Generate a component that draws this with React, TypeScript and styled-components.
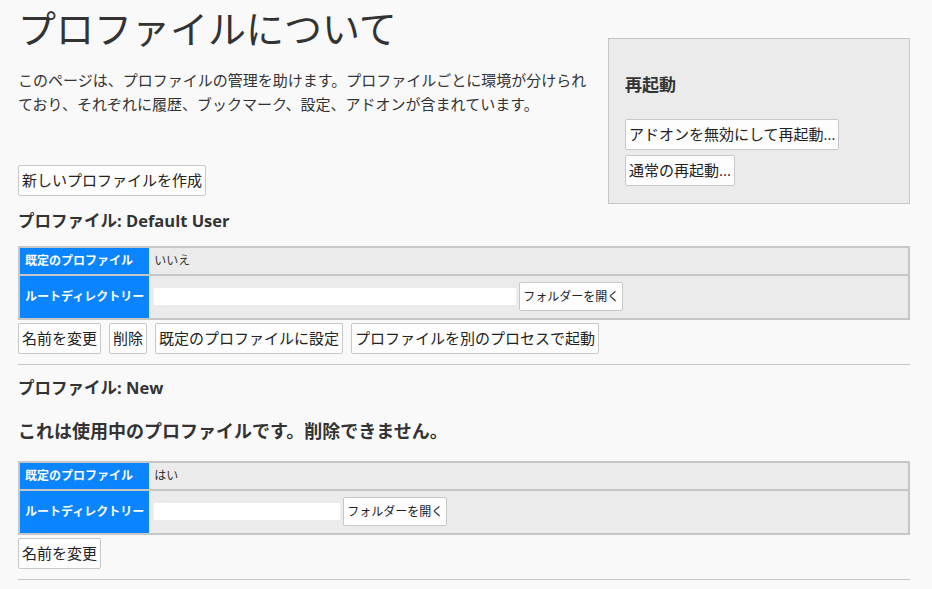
import React from "react";
import styled, { createGlobalStyle } from "styled-components";

const GlobalStyle = createGlobalStyle`
  html, body {
    margin: 0;
    padding: 0;
    background: #f9f9fa;
  }
  body {
    font-family: "Open Sans", "Noto Sans CJK JP", sans-serif;
    color: #333;
  }
`;

const Page = styled.main`
  width: 892px;
  margin-left: 18px;
`;

const Top = styled.div`
  display: flex;
  justify-content: space-between;
  align-items: flex-start;
  margin-bottom: 5px;
`;

const Intro = styled.div`
  width: 578px;
`;

const Title = styled.h1`
  margin: 0;
  padding-top: 5px;
  font-size: 38px;
  line-height: 46px;
  font-weight: 400;
  color: #333;
`;

const Lead = styled.p`
  margin: 17px 0 0;
  font-size: 15px;
  line-height: 24px;
  color: #333;
`;

const ButtonRow = styled.div<{ $top: number }>`
  display: flex;
  gap: 8px;
  margin-top: ${(p) => p.$top}px;
`;

const Button = styled.button<{ $small?: boolean }>`
  font-family: inherit;
  font-size: ${(p) => (p.$small ? 12 : 15)}px;
  line-height: ${(p) => (p.$small ? 19 : 23)}px;
  padding: ${(p) => (p.$small ? "4px 3px" : "3px 3px")};
  margin: 0;
  border: 1px solid #c8c8c8;
  border-radius: 2px;
  background: #fdfdfd;
  color: #222;
  white-space: nowrap;
  cursor: pointer;
`;

const ActionBox = styled.aside`
  box-sizing: border-box;
  width: 302px;
  margin-top: 38px;
  padding: 0 16px 17px;
  background: #ebebeb;
  border: 1px solid #c6c6c6;
  display: flex;
  flex-direction: column;
  align-items: flex-start;
  gap: 5px;
`;

const BoxTitle = styled.h3`
  margin: 34px 0 17px;
  font-size: 17px;
  line-height: 24px;
  font-weight: 700;
  color: #333;
`;

const SectionTitle = styled.h2`
  margin: 0;
  font-size: 16.5px;
  line-height: 24px;
  font-weight: 700;
  color: #333;
`;

const Notice = styled.h3`
  margin: 18px 0 0;
  font-size: 18px;
  line-height: 26px;
  font-weight: 700;
  color: #333;
`;

const InfoTable = styled.table<{ $top: number }>`
  width: 100%;
  border-collapse: collapse;
  border: 2px solid #c6c6c6;
  margin-top: ${(p) => p.$top}px;
`;

const Row = styled.tr`
  & + & {
    border-top: 2px solid #c6c6c6;
  }
`;

const HeadCell = styled.th`
  width: 118px;
  padding: 4px 5px;
  background: #0a84ff;
  color: #fff;
  font-size: 12px;
  line-height: 18px;
  font-weight: 700;
  text-align: left;
  white-space: nowrap;
`;

const Cell = styled.td`
  padding: 4px 5px;
  background: #ebebeb;
  font-size: 12px;
  line-height: 18px;
  color: #333;
  vertical-align: middle;
`;

const PathLine = styled.div`
  display: flex;
  align-items: center;
  gap: 3px;
  margin: 2px 0 3px;
`;

const PathValue = styled.span<{ $width: number }>`
  display: inline-block;
  width: ${(p) => p.$width}px;
  height: 17px;
  background: #fff;
`;

const Divider = styled.hr`
  border: 0;
  border-top: 1px solid #c6c6c6;
  margin: 10px 0 11px;
`;

type Profile = {
  name: string;
  isDefault: boolean;
  inUse: boolean;
  pathWidth: number;
};

const profiles: Profile[] = [
  { name: "Default User", isDefault: false, inUse: false, pathWidth: 362 },
  { name: "New", isDefault: true, inUse: true, pathWidth: 186 },
];

function ProfileSection({ profile }: { profile: Profile }) {
  return (
    <section>
      <SectionTitle>プロファイル: {profile.name}</SectionTitle>
      {profile.inUse && (
        <Notice>これは使用中のプロファイルです。削除できません。</Notice>
      )}
      <InfoTable $top={profile.inUse ? 17 : 13}>
        <tbody>
          <Row>
            <HeadCell>既定のプロファイル</HeadCell>
            <Cell>{profile.isDefault ? "はい" : "いいえ"}</Cell>
          </Row>
          <Row>
            <HeadCell>ルートディレクトリー</HeadCell>
            <Cell>
              <PathLine>
                <PathValue $width={profile.pathWidth} />
                <Button $small>フォルダーを開く</Button>
              </PathLine>
            </Cell>
          </Row>
        </tbody>
      </InfoTable>
      <ButtonRow $top={3}>
        <Button>名前を変更</Button>
        {!profile.inUse && (
          <>
            <Button>削除</Button>
            <Button>既定のプロファイルに設定</Button>
            <Button>プロファイルを別のプロセスで起動</Button>
          </>
        )}
      </ButtonRow>
      <Divider />
    </section>
  );
}

export default function App() {
  return (
    <>
      <GlobalStyle />
      <Page>
        <Top>
          <Intro>
            <Title>プロファイルについて</Title>
            <Lead>
              このページは、プロファイルの管理を助けます。プロファイルごとに環境が分けられており、それぞれに履歴、ブックマーク、設定、アドオンが含まれています。
            </Lead>
            <ButtonRow $top={49}>
              <Button>新しいプロファイルを作成</Button>
            </ButtonRow>
          </Intro>
          <ActionBox>
            <BoxTitle>再起動</BoxTitle>
            <Button>アドオンを無効にして再起動...</Button>
            <Button>通常の再起動...</Button>
          </ActionBox>
        </Top>
        {profiles.map((p) => (
          <ProfileSection key={p.name} profile={p} />
        ))}
      </Page>
    </>
  );
}
